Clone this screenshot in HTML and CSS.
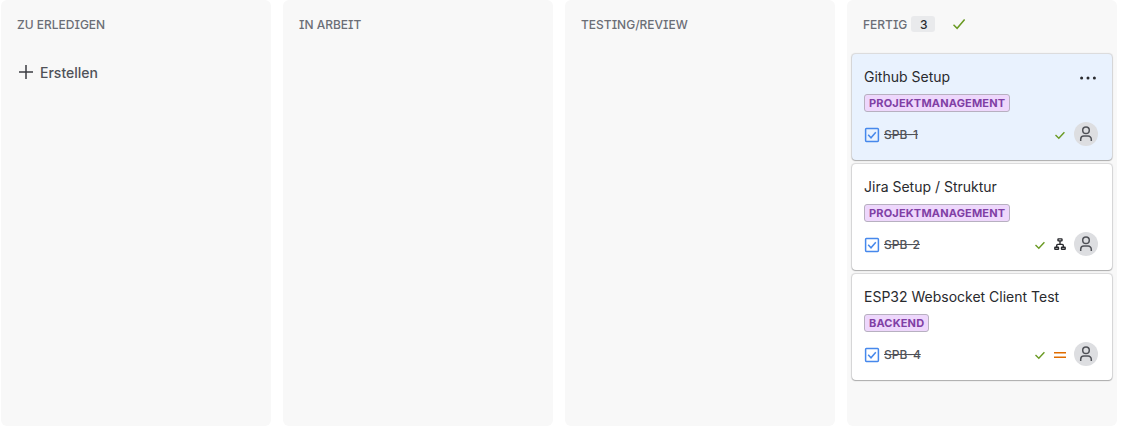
FILE: index.html
```html
<!DOCTYPE html>
<html lang="de">
<head>
<meta charset="utf-8">
<title>Board</title>
<link rel="stylesheet" href="styles.css">
</head>
<body>
<svg class="defs" aria-hidden="true">
  <symbol id="check" viewBox="0 0 12 12"><path d="M0.5 6.8 4.1 10.3 11.6 1.5" fill="none" stroke="currentColor" stroke-width="1.5"/></symbol>
  <symbol id="tick" viewBox="0 0 16 16"><path d="M3.5 8.1 6.8 11.3 12.4 5.2" fill="none" stroke="currentColor" stroke-width="1.4"/></symbol>
  <symbol id="task" viewBox="0 0 16 16"><rect x="1.6" y="1.6" width="12.8" height="12.8" rx="0.8" fill="none" stroke="currentColor" stroke-width="1.5"/><path d="M4.2 7.8 7 10.8 11.8 5.2" fill="none" stroke="currentColor" stroke-width="1.5"/></symbol>
  <symbol id="person" viewBox="0 0 24 24"><g fill="none" stroke="currentColor" stroke-width="1.5"><circle cx="12" cy="8.2" r="3.3"/><path d="M6.7 19V17.3a3.2 3.2 0 0 1 3.2-3.2h4.2a3.2 3.2 0 0 1 3.2 3.2V19"/></g></symbol>
  <symbol id="tree" viewBox="0 0 16 16"><g fill="none" stroke="currentColor" stroke-width="1.4"><rect x="6" y="2.9" width="4" height="2" rx=".4"/><rect x="2.8" y="11.3" width="3.7" height="2" rx=".4"/><rect x="9.5" y="11.3" width="3.7" height="2" rx=".4"/><path d="M8 5v3.2M4.7 11V9.4a1 1 0 0 1 1-1h4.6a1 1 0 0 1 1 1V11"/></g></symbol>
  <symbol id="medium" viewBox="0 0 16 16"><path d="M2 5.7h12M2 10.2h12" stroke="currentColor" stroke-width="1.5"/></symbol>
</svg>
<main class="board">
  <section class="column">
    <header class="column-header"><h2>Zu erledigen</h2></header>
    <button class="create"><svg viewBox="0 0 16 16"><path d="M8 1v14M1 8h14" stroke="currentColor" stroke-width="1.5"/></svg><span>Erstellen</span></button>
  </section>
  <section class="column"><header class="column-header"><h2>In Arbeit</h2></header></section>
  <section class="column"><header class="column-header"><h2>Testing/Review</h2></header></section>
  <section class="column">
    <header class="column-header"><h2>Fertig</h2><span class="count">3</span><svg class="done"><use href="#check"/></svg></header>
    <div class="cards">
      <article class="card active">
        <div class="card-top"><h3>Github Setup</h3><svg class="more" viewBox="0 0 18 16" fill="currentColor"><circle cx="2.6" cy="8" r="1.5"/><circle cx="9" cy="8" r="1.5"/><circle cx="15.4" cy="8" r="1.5"/></svg></div>
        <span class="tag">PROJEKTMANAGEMENT</span>
        <footer><svg class="icon task"><use href="#task"/></svg><span class="key">SPB-1</span><div class="meta"><svg class="icon tick"><use href="#tick"/></svg><svg class="avatar"><use href="#person"/></svg></div></footer>
      </article>
      <article class="card">
        <div class="card-top"><h3>Jira Setup / Struktur</h3></div>
        <span class="tag">PROJEKTMANAGEMENT</span>
        <footer><svg class="icon task"><use href="#task"/></svg><span class="key">SPB-2</span><div class="meta"><svg class="icon tick"><use href="#tick"/></svg><svg class="icon tree"><use href="#tree"/></svg><svg class="avatar"><use href="#person"/></svg></div></footer>
      </article>
      <article class="card">
        <div class="card-top"><h3>ESP32 Websocket Client Test</h3></div>
        <span class="tag">BACKEND</span>
        <footer><svg class="icon task"><use href="#task"/></svg><span class="key">SPB-4</span><div class="meta"><svg class="icon tick"><use href="#tick"/></svg><svg class="icon medium"><use href="#medium"/></svg><svg class="avatar"><use href="#person"/></svg></div></footer>
      </article>
    </div>
  </section>
</main>
</body>
</html>
```
FILE: styles.css
```css
* { box-sizing: border-box; }
body { margin: 0; background: #fff; font-family: Inter, "Liberation Sans", sans-serif; color: #292a2e; overflow: hidden; }
h2, h3 { margin: 0; }
svg { display: block; flex: none; }
.defs { display: none; }
.board { display: flex; gap: 12px; padding-left: 1px; height: 426px; }
.column { width: 270px; flex: none; background: #f8f8f8; border-radius: 6px; }
.column-header { display: flex; align-items: center; height: 48px; padding-left: 16px; }
.column-header h2 { padding-top: 2px; font-size: 12px; line-height: 16px; font-weight: 500; color: #6b6e76; text-transform: uppercase; font-feature-settings: "cv08"; }
.count { width: 24px; height: 16px; margin-left: 4px; border-radius: 3px; background: #e9eaec; text-align: center; font-size: 12px; line-height: 18px; font-weight: 500; padding-left: 1px; }
.done { width: 12px; height: 12px; margin-left: 18px; color: #6a9a23; }
.create { display: flex; align-items: center; gap: 6px; margin: 15px 0 0 17px; padding: 0; border: 0; background: none; color: #505258; font: 500 14px/20px Inter, "Liberation Sans", sans-serif; }
.create svg { width: 16px; height: 16px; margin-bottom: 2px; color: #3b3d42; }
.cards { display: flex; flex-direction: column; gap: 4px; padding: 6px 5px 0; }
.card { height: 106px; padding: 13px 14px 0 12px; border-radius: 4px; background: #fff; box-shadow: 0 1px 1px rgba(30,31,33,.25), 0 0 1px 0.5px rgba(30,31,33,.14); }
.card.active { background: #e9f2fe; }
.card-top { display: flex; justify-content: space-between; align-items: center; height: 20px; }
.card h3 { font-size: 14px; line-height: 20px; font-weight: 400; }
.more { width: 18px; height: 16px; margin: 2px 1px 0 0; }
.tag { display: block; width: fit-content; height: 18px; margin-top: 7px; padding: 0 4px; border: 1px solid #b7b0c0; border-radius: 3px; background: #eed7fc; color: #803fa5; font-size: 11px; line-height: 16px; font-weight: 700; letter-spacing: .17px; }
.card footer { display: flex; align-items: center; height: 24px; margin-top: 10px; }
.icon { width: 16px; height: 16px; }
.task { margin-top: 2px; color: #4688ec; }
.key { margin: 2px 0 0 4px; font-size: 12px; line-height: 16px; color: #505258; font-weight: 500; text-decoration: line-through; }
.meta { display: flex; align-items: center; gap: 4px; margin-left: auto; }
.tick { margin-top: 1px; color: #6a9a23; }
.medium { margin-top: 2px; color: #e06c00; }
.avatar { width: 24px; height: 24px; margin-left: 2px; border-radius: 50%; background: #dddee1; color: #505258; }
```
